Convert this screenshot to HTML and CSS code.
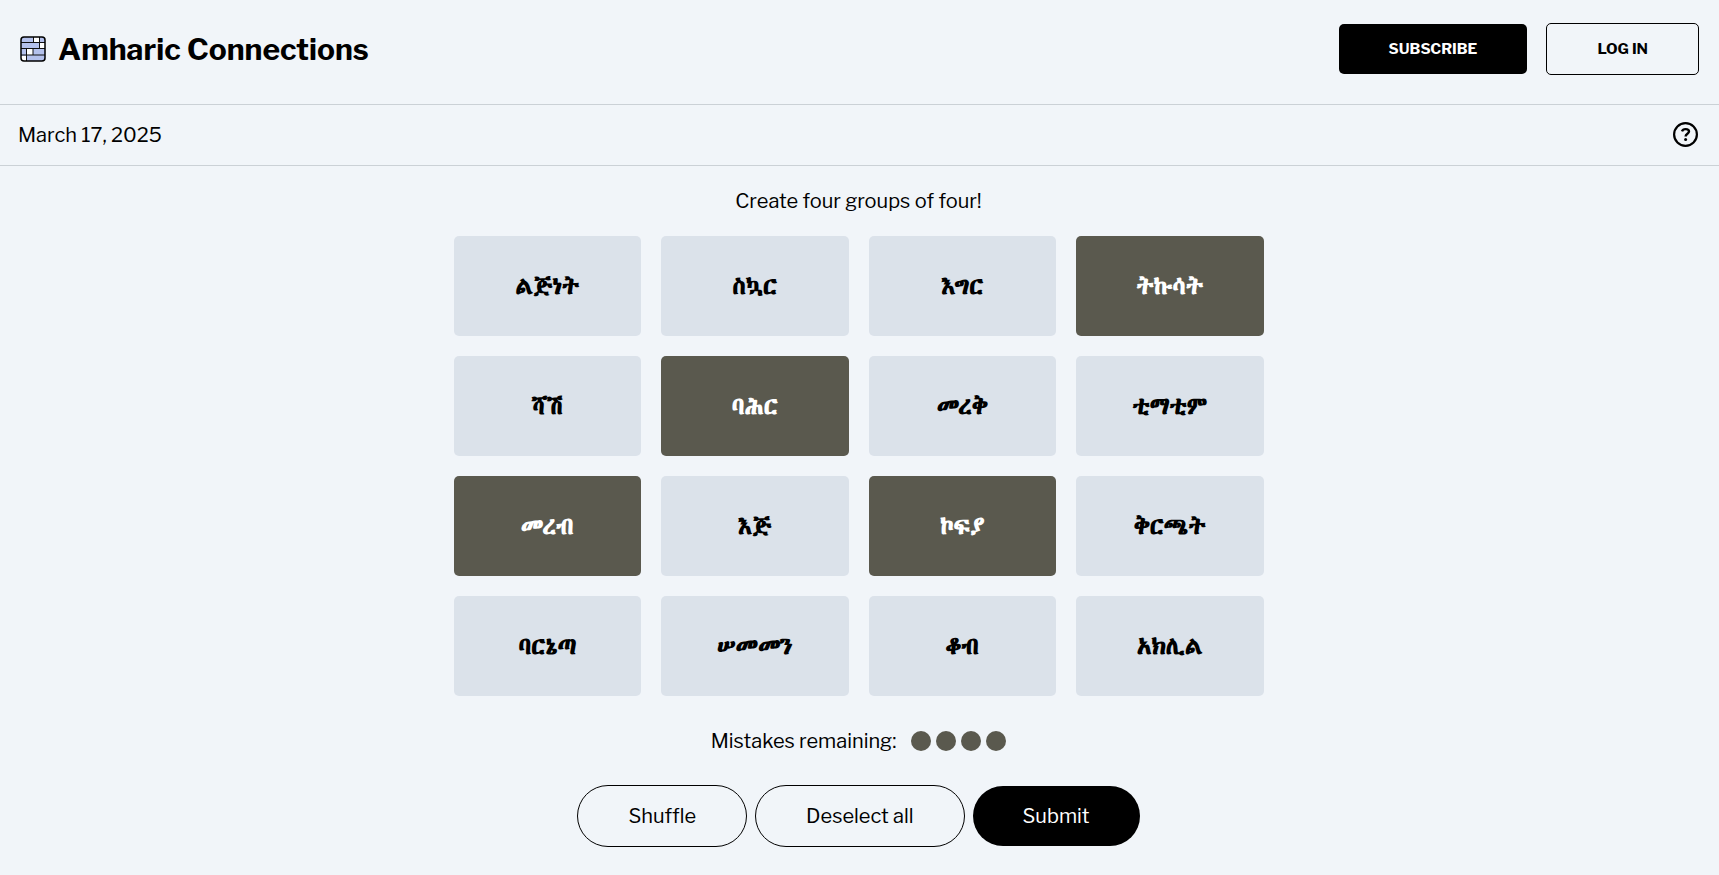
FILE: index.html
```html
<!DOCTYPE html>
<html lang="en">
<head>
<meta charset="utf-8">
<title>Amharic Connections</title>
<link rel="stylesheet" href="styles.css">
</head>
<body>
<header class="header">
	<h1 class="brand">
		<svg class="logo" viewBox="0 0 26 26" width="26" height="26" aria-hidden="true">
			<rect x="1" y="1" width="24" height="24" rx="3" fill="#b4c1ec"/>
			<path fill="#fff" d="M13 1h6v5h-6zM19 7h6v5h-6zM7 13h6v6H7zM1 20h5v5H2q-1 0-1-1z"/>
			<path fill="none" stroke="#111" d="M1 6.500h24M1 12.500h24M1 19h24M13.500 1v5M19.500 1v11M6.500 13v12M13 13v6"/>
			<rect x="1" y="1" width="24" height="24" rx="3" fill="none" stroke="#000" stroke-width="1.500"/>
		</svg>
		Amharic Connections
	</h1>
	<div class="account">
		<button class="btn btn_dark" type="button">SUBSCRIBE</button>
		<button class="btn" type="button">LOG IN</button>
	</div>
</header>
<div class="datebar">
	<time datetime="2025-03-17">March 17, 2025</time>
	<button class="help" type="button" aria-label="Help">
		<svg viewBox="0 0 26 26" width="26" height="26" fill="none" stroke="#000" stroke-width="2.200" aria-hidden="true">
			<circle cx="12.500" cy="12.500" r="11.400"/>
			<path stroke-width="2.400" d="M9 9.400c.6-1.800 1.900-2.300 3.600-2.300 2 0 3.400.9 3.400 2.500 0 2.100-3.400 2.200-3.400 4.800"/>
			<circle cx="12.600" cy="17.400" r="1.500" fill="#000" stroke="none"/>
		</svg>
	</button>
</div>
<main class="game">
	<p class="intro">Create four groups of four!</p>
	<div class="board" lang="am">
		<button class="tile" type="button">ልጅነት</button>
		<button class="tile" type="button">ስኳር</button>
		<button class="tile" type="button">እግር</button>
		<button class="tile tile_selected" type="button" aria-pressed="true">ትኩሳት</button>
		<button class="tile" type="button">ሻሽ</button>
		<button class="tile tile_selected" type="button" aria-pressed="true">ባሕር</button>
		<button class="tile" type="button">መረቅ</button>
		<button class="tile" type="button">ቲማቲም</button>
		<button class="tile tile_selected" type="button" aria-pressed="true">መረብ</button>
		<button class="tile" type="button">እጅ</button>
		<button class="tile tile_selected" type="button" aria-pressed="true">ኮፍያ</button>
		<button class="tile" type="button">ቅርጫት</button>
		<button class="tile" type="button">ባርኔጣ</button>
		<button class="tile" type="button">ሠመመን</button>
		<button class="tile" type="button">ቆብ</button>
		<button class="tile" type="button">አክሊል</button>
	</div>
	<div class="mistakes">
		<span>Mistakes remaining:</span>
		<ul class="dots">
			<li class="dot"></li>
			<li class="dot"></li>
			<li class="dot"></li>
			<li class="dot"></li>
		</ul>
	</div>
	<div class="actions">
		<button class="pill" type="button">Shuffle</button>
		<button class="pill" type="button">Deselect all</button>
		<button class="pill pill_dark" type="button">Submit</button>
	</div>
</main>
</body>
</html>
```
FILE: styles.css
```css
*{box-sizing:border-box;}
body{margin:0;background:#f1f5f9;color:#000;font:400 20px/24px "Libre Franklin", Inter, "Liberation Sans", Arial, sans-serif;}
button{font:inherit;color:inherit;cursor:pointer;}
.header{display:flex;justify-content:space-between;align-items:flex-start;height:105px;padding:23px 20px 0;border-bottom:1px solid #cbd1d6;}
.brand{display:flex;align-items:center;gap:12px;margin:0;font-size:30px;line-height:52px;font-weight:700;}
.account{display:flex;align-items:center;gap:19px;}
.btn{padding:16px 50px;border:1px solid #000;border-radius:5px;background:transparent;font-size:15px;line-height:18px;font-weight:700;}
.btn_dark{border:0;background:#000;color:#fff;}
.datebar{display:flex;justify-content:space-between;align-items:center;padding:17px 20px 17px 18px;border-bottom:1px solid #cbd1d6;}
.help{display:flex;padding:0;border:0;background:none;}
.game{padding:0 20px 0 18px;}
.intro{margin:0;padding:23px 0;text-align:center;}
.board{display:grid;grid-template-columns:repeat(4,1fr);gap:20px;max-width:810px;margin:0 auto;}
.tile{height:100px;padding:0;border:0;border-radius:5px;background:#dbe2ea;font-family:"Abyssinica SIL", "Noto Sans Ethiopic", "Libre Franklin", sans-serif;font-size:24px;font-weight:700;}
.tile_selected{background:#5a594e;color:#fff;}
.mistakes{display:flex;justify-content:center;align-items:center;gap:15px;padding:33px 0 32px;}
.dots{display:flex;gap:5px;margin:0;padding:0;list-style:none;}
.dot{width:20px;height:20px;border-radius:50%;background:#5a594e;}
.actions{display:flex;justify-content:center;align-items:center;gap:8px;}
.pill{padding:18px 50px;border:1px solid #000;border-radius:31px;background:transparent;}
.pill_dark{border:0;background:#000;color:#fff;}
```
